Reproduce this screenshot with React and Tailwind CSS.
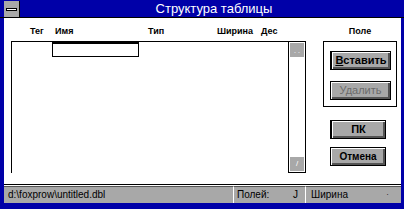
import React from 'react';

const btn =
  'flex items-center justify-center bg-[#a8a8a8] border border-black shadow-[inset_1px_1px_0_#ffffff,inset_-1px_-1px_0_#545454,inset_-2px_-2px_0_#545454] text-[10px] leading-none';

export default function App() {
  return (
    <div
      className="w-[404px] h-[209px] bg-[#0000a8] flex flex-col pl-[4px] pr-[3px] pb-[6px] overflow-hidden"
      style={{ fontFamily: '"Liberation Sans", Arial, sans-serif' }}
    >
      {/* Title bar */}
      <div className="h-[18px] -ml-[4px] -mr-[3px] flex border-b border-black">
        <div className="w-[4px]" />
        <div className="w-[16px] h-[16px] mt-[1px] bg-[#a8a8a8] flex items-center justify-center border-r border-black">
          <div className="w-[11px] h-[3px] bg-white border border-black" />
        </div>
        <div className="flex-1 flex items-center justify-center text-white text-[13px] leading-none pl-[4px]">
          Структура таблицы
        </div>
      </div>

      {/* Client */}
      <div className="flex-1 bg-white flex flex-col">
        <div className="h-[166px] flex pl-[7px]">
          <div className="w-[295px] flex flex-col">
            <div className="h-[23px] flex items-end pb-[5px] text-[9px] font-bold leading-none">
              <span className="w-[19px]" />
              <span className="w-[25px]">Тег</span>
              <span className="w-[93px]">Имя</span>
              <span className="w-[69px]">Тип</span>
              <span className="w-[44px]">Ширина</span>
              <span>Дес</span>
            </div>
            <div className="flex h-[132px]">
              <div className="w-[277px] border-l border-t border-black">
                <div className="ml-[40px] w-[87px] h-[15px] border border-black border-t-2" />
              </div>
              <div className="w-[18px] border border-black flex flex-col justify-between p-px">
                <div className="h-[14px] bg-[#a8a8a8] flex items-center justify-center">
                  <span className="text-white text-[7px] leading-none">. .</span>
                </div>
                <div className="h-[14px] bg-[#a8a8a8] flex items-center justify-center">
                  <span className="text-white text-[8px] leading-none">/</span>
                </div>
              </div>
            </div>
          </div>

          <div className="ml-[17px] w-[74px] flex flex-col">
            <div className="h-[23px] flex items-end justify-center pb-[5px] text-[9px] font-bold leading-none">
              Поле
            </div>
            <div className="h-[66px] border border-black flex flex-col pl-[6px] pt-[9px] gap-[11px]">
              <div className={`${btn} w-[61px] h-[19px] border-l-2 font-bold text-[11px]`}>
                <span>
                  <span className="underline">В</span>ставить
                </span>
              </div>
              <div className={`${btn} w-[61px] h-[19px] text-[#6b6b6b] text-[11px]`}>Удалить</div>
            </div>
            <div className={`${btn} w-[56px] h-[19px] ml-[7px] mt-[13px] border-l-2 font-bold text-[11px]`}>ПК</div>
            <div className={`${btn} w-[56px] h-[19px] ml-[7px] mt-[8px] font-bold text-[10px]`}>Отмена</div>
          </div>
        </div>

        <div className="h-px bg-black" />
        <div className="h-px" />
        <div className="h-[17px] bg-[#a8a8a8] flex text-[10px] leading-none">
          <div className="w-[229px] flex items-center pl-[4px] border-t border-[#545454]">
            d:\foxprow\untitled.dbl
          </div>
          <div className="w-[72px] flex items-center justify-between pl-[3px] pr-[7px] border-l border-t border-l-white border-t-[#545454]">
            <span>Полей:</span>
            <span>J</span>
          </div>
          <div className="flex-1 flex items-center justify-between pl-[5px] pr-[12px] border-l border-t border-l-white border-t-[#545454]">
            <span>Ширина</span>
            <span className="text-[8px]">·</span>
          </div>
        </div>
      </div>
    </div>
  );
}
